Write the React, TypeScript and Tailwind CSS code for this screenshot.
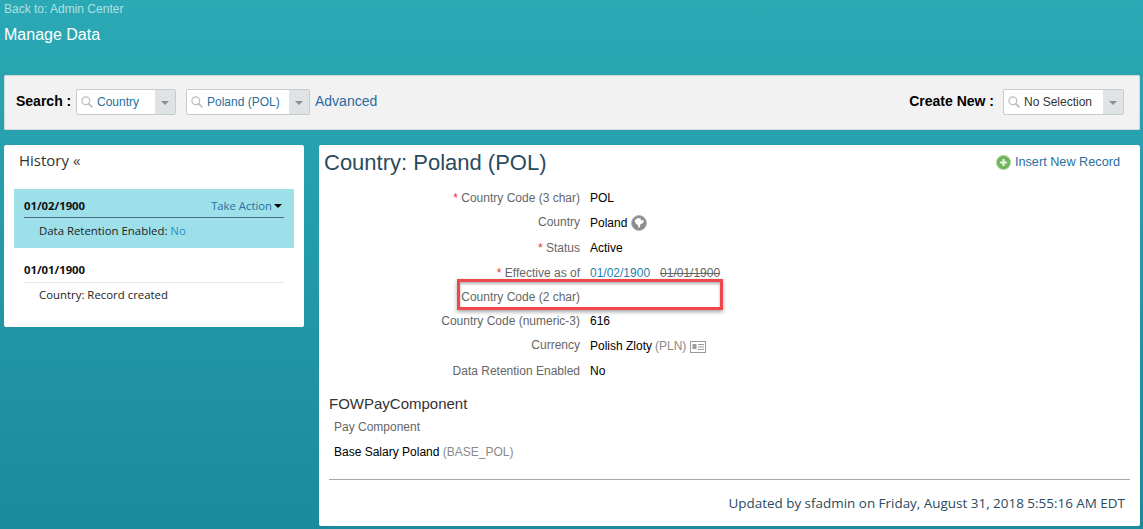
import React from "react";

const SANS = "font-['Liberation_Sans',Arial,sans-serif]";
const SAP = "font-['Open_Sans','Liberation_Sans',sans-serif]";

const SearchIcon = () => (
  <svg width="12" height="12" viewBox="0 0 12 12" className="shrink-0" fill="none" stroke="#bdbdbd">
    <circle cx="4.8" cy="4.8" r="3.9" strokeWidth="1.2" />
    <path d="M7.600 7.600 L11.400 11.400" strokeWidth="1.800" />
  </svg>
);

const Combo = ({ text, width, dark }: { text: string; width: string; dark?: boolean }) => (
  <div className={`flex h-[26px] ${width} rounded-[2px] border border-[#c5ccd0] bg-white`}>
    <div className="flex flex-1 items-center gap-[4px] pl-1 min-w-0">
      <SearchIcon />
      <span className={`text-[12px] whitespace-nowrap ${dark ? "text-[#333333]" : "text-[#2a6f9e]"}`}>{text}</span>
    </div>
    <div className="flex w-[20px] items-center justify-center bg-[#dfe3e5]">
      <span className="mt-[2px] h-0 w-0 border-x-[4px] border-t-[4px] border-x-transparent border-t-[#8a8f92]" />
    </div>
  </div>
);

const Row = ({
  label,
  req,
  height,
  raised,
  children,
}: {
  label: string;
  req?: boolean;
  height: string;
  raised?: boolean;
  children?: React.ReactNode;
}) => (
  <div className={`flex ${height} items-center text-[12px]`}>
    <div className={`w-[256px] text-right text-[#666666] whitespace-nowrap ${raised ? "mb-[2px]" : ""}`}>
      {req && <span className="text-[#e8312f]">* </span>}
      {label}
    </div>
    <div className="ml-[10px] flex items-center text-black whitespace-nowrap">{children}</div>
  </div>
);

export default function App() {
  return (
    <div className={`h-[529px] w-[1143px] overflow-hidden bg-gradient-to-b from-[#2ba9b5] to-[#1a8a9d] ${SANS}`}>
      <div className="h-[75px] pl-1">
        <div className="pt-[2px] text-[12px] leading-[14px] text-[#aee2e5]">Back to: Admin Center</div>
        <div className="mt-[10px] text-[16px] leading-[18px] text-white">Manage Data</div>
      </div>

      <div className="mx-1 flex h-[55px] w-[1136px] items-center rounded-[1px] border border-[#d5d8d9] bg-[#f2f2f2] pb-[2px] pl-[11px] pr-[15px]">
        <span className="mr-[5px] w-[55px] whitespace-nowrap text-[14px] font-bold text-black">Search :</span>
        <Combo text="Country" width="w-[100px]" />
        <div className="w-[10px]" />
        <Combo text="Poland (POL)" width="w-[124px]" />
        <span className="ml-[5px] text-[14px] text-[#2a6a9e]">Advanced</span>
        <span className="ml-auto mr-[9px] text-[14px] font-bold text-black">Create New :</span>
        <Combo text="No Selection" width="w-[121px]" dark />
      </div>

      <div className="mt-[15px] flex items-start">
        <div className={`ml-1 h-[182px] w-[300px] rounded-[2px] bg-white ${SAP}`}>
          <div className="pl-[15px] pt-[4px] text-[15px] leading-[22px] text-[#333333]">
            History <span className="text-[#444444]">«</span>
          </div>
          <div className="mx-[10px] mt-[18px] h-[59px] bg-[#9ee0ea] px-[10px] pt-[8px]">
            <div className="flex h-[21px] items-center justify-between border-b border-[#4f6a80] pb-[2px] text-[11.3px]">
              <span className="font-bold text-[#111111]">01/02/1900</span>
              <span className="mr-[2px] flex items-center gap-[2px] text-[#2a6f9e]">
                Take Action
                <span className="h-0 w-0 border-x-[4px] border-t-[4px] border-x-transparent border-t-black" />
              </span>
            </div>
            <div className="mt-[4px] pl-[15px] text-[11.4px] leading-[18px] text-[#222222]">
              Data Retention Enabled: <span className="text-[#2a8fbf]">No</span>
            </div>
          </div>
          <div className="mx-[20px] mt-[11px] flex h-[24px] items-center border-b border-[#e8e8e8] text-[11.3px] font-bold text-[#111111]">
            01/01/1900
          </div>
          <div className="mx-[20px] mt-[3px] pl-[15px] text-[11.4px] leading-[18px] text-[#222222]">
            Country: Record created
          </div>
        </div>

        <div className="ml-[15px] h-[381px] w-[821px] rounded-[2px] bg-white">
          <div className="flex h-[35px] items-center justify-between pl-[5px] pr-[20px]">
            <span className="text-[22px] leading-[28px] text-[#2b4b5e]">Country: Poland (POL)</span>
            <span className="flex items-center gap-[4px] text-[12.7px] text-[#2a6f9e]">
              <svg width="15" height="15" viewBox="0 0 15 15">
                <circle cx="7.5" cy="7.5" r="7" fill="#6fb55a" stroke="#a9d49a" strokeWidth="1" />
                <path d="M7.5 4v7M4 7.5h7" stroke="#e8f5e2" strokeWidth="2.2" />
              </svg>
              Insert New Record
            </span>
          </div>
          <div className="pl-[5px] pt-[5px]">
            <Row label="Country Code (3 char)" req height="h-[25px]">POL</Row>
            <Row label="Country" raised height="h-[25px]">
              Poland
              <svg width="16" height="16" viewBox="0 0 16 16" className="ml-[4px] mt-[1px]">
                <circle cx="8" cy="8" r="7.5" fill="#8c8c8c" stroke="#b5b5b5" strokeWidth="1" />
                <path d="M3.5 5.5l3-2.5 3.500.5-.5 2 2.500-.5 1 1-1.500 2.500-2 .5-.5 3-1.500 1-.5-3-2-1z" fill="#ffffff" />
              </svg>
            </Row>
            <Row label="Status" req height="h-[25px]">Active</Row>
            <Row label="Effective as of" req height="h-[25px]">
              <span className="text-[#1f7fa8]">01/02/1900</span>
              <span className="ml-[10px] text-[#666666] line-through">01/01/1900</span>
            </Row>
            <div className="relative">
              <Row label="Country Code (2 char)" height="h-[24px]" />
              <div className="absolute left-[133px] top-[-6px] h-[31px] w-[266px] border-[3px] border-[#f0474c] shadow-[0_2px_4px_rgba(0,0,0,0.35),inset_0_2px_3px_rgba(0,0,0,0.3)]" />
            </div>
            <Row label="Country Code (numeric-3)" height="h-[24px]">616</Row>
            <Row label="Currency" raised height="h-[25px]">
              Polish Zloty <span className="ml-[3px] text-[#8a8a8a]">(PLN)</span>
              <svg width="16" height="12" viewBox="0 0 16 12" className="ml-[4px] mt-[2px]" fill="none">
                <rect x="0.5" y="0.5" width="15" height="11" stroke="#9a9a9a" />
                <rect x="2.5" y="3" width="4" height="5" fill="#9a9a9a" />
                <path d="M8 3.500h6M8 6h6M8 8.500h6" stroke="#9a9a9a" />
              </svg>
            </Row>
            <Row label="Data Retention Enabled" height="h-[26px]">No</Row>
          </div>
          <div className="pl-[10px]">
            <div className="mt-[11px] text-[15px] leading-[18px] text-[#333333]">FOWPayComponent</div>
            <div className="mt-[7px] pl-[5px] text-[12px] leading-[14px] text-[#666666]">Pay Component</div>
            <div className="mt-[11px] pl-[5px] text-[12px] leading-[14px] text-black">
              Base Salary Poland <span className="text-[#8a8a8a]">(BASE_POL)</span>
            </div>
          </div>
          <div className="mx-[10px] mt-[20px] border-t border-[#a8a8a8]" />
          <div className={`mt-[14px] pr-[15px] text-right text-[13.45px] leading-[18px] text-[#2b4b5e] ${SAP}`}>
            Updated by sfadmin on Friday, August 31, 2018 5:55:16 AM EDT
          </div>
        </div>
      </div>
    </div>
  );
}
